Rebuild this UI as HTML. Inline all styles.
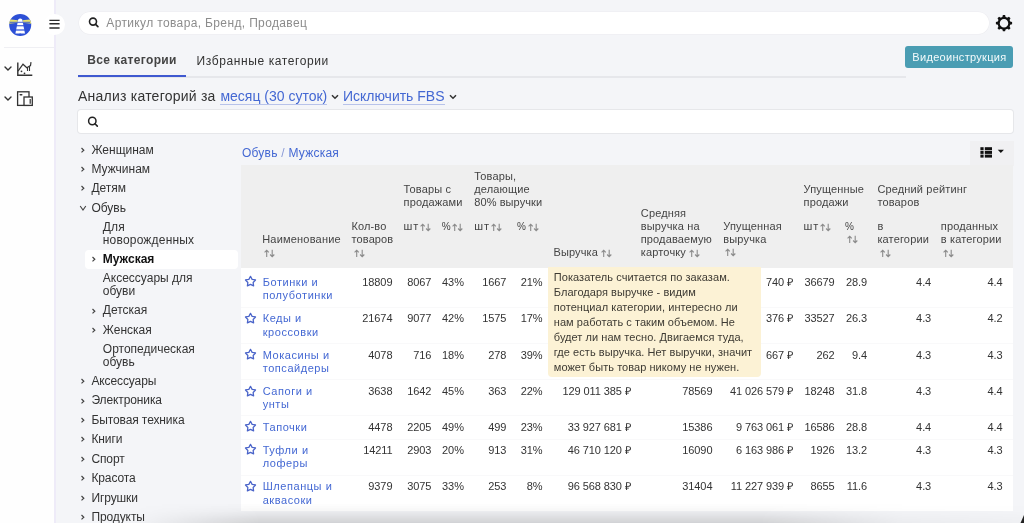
<!DOCTYPE html>
<html><head><meta charset="utf-8"><style>
html,body{margin:0;padding:0;}
body{width:1024px;height:523px;overflow:hidden;position:relative;background:#f4f5f8;font-family:"Liberation Sans", sans-serif;}
.t{position:absolute;white-space:nowrap;}
.r{position:absolute;}
#w{position:absolute;left:0;top:0;width:1024px;height:523px;filter:blur(0.3px);}
</style></head><body><div id="w">
<div class="r" style="left:0px;top:0px;width:54px;height:523px;background:#fefefe;"></div>
<div class="r" style="left:54px;top:0px;width:2px;height:523px;background:#eeebf8;"></div>
<div class="r" style="left:4px;top:47px;width:50px;height:1px;background:#efeff3;"></div>
<svg class="r" style="left:0px;top:0px;" width="40" height="40" viewBox="0 0 40 40">
<defs><clipPath id="lc"><circle cx="20.2" cy="24.9" r="11"/></clipPath></defs>
<g clip-path="url(#lc)">
<rect x="0" y="0" width="40" height="40" fill="#2d50d6"/>
<path d="M8 19.2 L17.8 20.3 L17.8 22.7 L8 23.8 Z" fill="#e9e26a"/>
<path d="M32.4 19.2 L22.6 20.3 L22.6 22.7 L32.4 23.8 Z" fill="#e9e26a"/>
<path d="M18.2 19.6 Q20.2 17.4 22.2 19.6 L25 33.6 L15.4 33.6 Z" fill="#fff"/>
<rect x="10" y="21.8" width="20" height="0.9" fill="#2d50d6"/>
<rect x="10" y="25.2" width="20" height="1.1" fill="#2d50d6"/>
<rect x="10" y="29.4" width="20" height="1.2" fill="#2d50d6"/>
</g>
<circle cx="20.2" cy="34.6" r="1.1" fill="#2d50d6"/>
</svg>
<div class="r" style="left:44px;top:14px;width:21px;height:21px;border-radius:50%;background:#fff;"></div>
<svg class="r" style="left:48px;top:18px;" width="14" height="12" viewBox="0 0 14 12"><path d="M1.4 2.4H11.6M1.4 5.8H11.6M1.4 10H11.6" stroke="#2b2b2b" stroke-width="1.4"/></svg>
<svg class="r" style="left:3px;top:65px;" width="10" height="7" viewBox="0 0 10 7"><path d="M2 2 L5 5 L8 2" fill="none" stroke="#333" stroke-width="1.4" stroke-linecap="round"/></svg>
<svg class="r" style="left:16px;top:61px;" width="18" height="17" viewBox="0 0 18 17"><path d="M1.8 1.5 V14.2 H16.3" fill="none" stroke="#333" stroke-width="1.4"/>
<path d="M2 10.2 L7 3.2 L10.8 6.8 L14.5 4.6 L15 1.2" fill="none" stroke="#333" stroke-width="1.2"/>
<path d="M11.5 6.5 V10 M13.5 5.5 V10" stroke="#333" stroke-width="1.1"/>
<circle cx="5.5" cy="10.3" r="0.9" fill="#333"/><circle cx="8.5" cy="12.3" r="0.9" fill="#333"/></svg>
<svg class="r" style="left:3px;top:95px;" width="10" height="7" viewBox="0 0 10 7"><path d="M2 2 L5 5 L8 2" fill="none" stroke="#333" stroke-width="1.4" stroke-linecap="round"/></svg>
<svg class="r" style="left:16px;top:90px;" width="18" height="17" viewBox="0 0 18 17"><rect x="1.6" y="1.8" width="11.4" height="13.6" fill="none" stroke="#333" stroke-width="1.3"/>
<rect x="8" y="7" width="8.3" height="8.4" fill="#fff" stroke="#333" stroke-width="1.3"/>
<rect x="3.5" y="4" width="3" height="1.6" rx="0.8" fill="#333"/>
<path d="M14.2 9 V13.8" stroke="#333" stroke-width="1.2"/></svg>
<div class="r" style="left:79px;top:11.5px;width:910px;height:22px;border-radius:11px;background:#fff;box-shadow:0 0 0 0.6px #ececf0;"></div>
<svg class="r" style="left:87px;top:16px;" width="14" height="14" viewBox="0 0 14 14"><circle cx="6" cy="5.6" r="3.5" fill="none" stroke="#222" stroke-width="1.6"/><path d="M8.6 8.3 L10.9 10.6" stroke="#222" stroke-width="1.7" stroke-linecap="round"/></svg>
<div class="t" style="top:16.00px;font-size:12px;line-height:15px;color:#8c8c8c;letter-spacing:0.36px;left:106.30px;">Артикул товара, Бренд, Продавец</div>
<svg class="r" style="left:994px;top:13px;" width="20" height="20" viewBox="0 0 20 20"><g transform="translate(10,10.2)"><circle r="5.3" fill="none" stroke="#111" stroke-width="2.1"/><path d="M-1.9 -5 L-1.1 -8.1 L1.1 -8.1 L1.9 -5 Z" fill="#111" transform="rotate(0)"/><path d="M-1.9 -5 L-1.1 -8.1 L1.1 -8.1 L1.9 -5 Z" fill="#111" transform="rotate(45)"/><path d="M-1.9 -5 L-1.1 -8.1 L1.1 -8.1 L1.9 -5 Z" fill="#111" transform="rotate(90)"/><path d="M-1.9 -5 L-1.1 -8.1 L1.1 -8.1 L1.9 -5 Z" fill="#111" transform="rotate(135)"/><path d="M-1.9 -5 L-1.1 -8.1 L1.1 -8.1 L1.9 -5 Z" fill="#111" transform="rotate(180)"/><path d="M-1.9 -5 L-1.1 -8.1 L1.1 -8.1 L1.9 -5 Z" fill="#111" transform="rotate(225)"/><path d="M-1.9 -5 L-1.1 -8.1 L1.1 -8.1 L1.9 -5 Z" fill="#111" transform="rotate(270)"/><path d="M-1.9 -5 L-1.1 -8.1 L1.1 -8.1 L1.9 -5 Z" fill="#111" transform="rotate(315)"/></g></svg>
<div class="t" style="top:53.00px;font-size:12px;line-height:15px;color:#444;font-weight:700;letter-spacing:0.37px;left:87.20px;">Все категории</div>
<div class="t" style="top:54.00px;font-size:12px;line-height:15px;color:#333;letter-spacing:0.6px;left:196.60px;">Избранные категории</div>
<div class="r" style="left:78px;top:76.4px;width:828px;height:1.2px;background:#e6e7eb;"></div>
<div class="r" style="left:77.5px;top:74.8px;width:108.5px;height:2.2px;background:#3f59d0;"></div>
<div class="r" style="left:905.3px;top:46.3px;width:107.6px;height:21.8px;border-radius:3px;background:#4a9db3;"></div>
<div class="t" style="top:50.00px;font-size:11px;line-height:14px;color:#f4fbfc;letter-spacing:0.31px;left:912.30px;">Видеоинструкция</div>
<div class="t" style="top:87.00px;font-size:14px;line-height:18px;color:#333;letter-spacing:0.23px;left:78.00px;">Анализ категорий за</div>
<div class="t" style="top:87.00px;font-size:14px;line-height:18px;color:#4468d3;left:220.40px;">месяц (30 суток)</div>
<div class="r" style="left:220.4px;top:104px;width:107px;height:1px;background:#b8c3ea;"></div>
<svg class="r" style="left:330px;top:93px;" width="10" height="8" viewBox="0 0 10 8"><path d="M2 2.2 L5 5.2 L8 2.2" fill="none" stroke="#333" stroke-width="1.5"/></svg>
<div class="t" style="top:87.00px;font-size:14px;line-height:18px;color:#4468d3;left:342.90px;">Исключить FBS</div>
<div class="r" style="left:342.9px;top:104px;width:102.5px;height:1px;background:#b8c3ea;"></div>
<svg class="r" style="left:448px;top:93px;" width="10" height="8" viewBox="0 0 10 8"><path d="M2 2.2 L5 5.2 L8 2.2" fill="none" stroke="#333" stroke-width="1.5"/></svg>
<div class="r" style="left:78.4px;top:110.3px;width:934.6px;height:23px;border-radius:3px;background:#fff;box-shadow:0 0 0 1px #e6e7ea;"></div>
<svg class="r" style="left:86px;top:115px;" width="14" height="14" viewBox="0 0 14 14"><circle cx="6.3" cy="6" r="3.7" fill="none" stroke="#222" stroke-width="1.5"/><path d="M9 8.8 L11.3 11.1" stroke="#222" stroke-width="1.6" stroke-linecap="round"/></svg>
<div class="r" style="left:85px;top:250px;width:153px;height:18.5px;background:#ffffff;border-radius:4px;"></div>
<svg class="r" style="left:80px;top:145.5px;" width="6" height="8" viewBox="0 0 6 8"><path d="M1.5 2 L3.8 4.2 L1.5 6.4" fill="none" stroke="#444" stroke-width="1.2"/></svg>
<div class="t" style="top:143.00px;font-size:12px;line-height:15px;color:#333;left:91.40px;">Женщинам</div>
<svg class="r" style="left:80px;top:165px;" width="6" height="8" viewBox="0 0 6 8"><path d="M1.5 2 L3.8 4.2 L1.5 6.4" fill="none" stroke="#444" stroke-width="1.2"/></svg>
<div class="t" style="top:162.00px;font-size:12px;line-height:15px;color:#333;left:91.40px;">Мужчинам</div>
<svg class="r" style="left:80px;top:184.3px;" width="6" height="8" viewBox="0 0 6 8"><path d="M1.5 2 L3.8 4.2 L1.5 6.4" fill="none" stroke="#444" stroke-width="1.2"/></svg>
<div class="t" style="top:181.00px;font-size:12px;line-height:15px;color:#333;left:91.40px;">Детям</div>
<svg class="r" style="left:79px;top:203.8px;" width="9" height="8" viewBox="0 0 9 8"><path d="M1.2 2 L4 6 L6.8 2" fill="none" stroke="#444" stroke-width="1.1"/></svg>
<div class="t" style="top:201.00px;font-size:12px;line-height:15px;color:#333;left:91.40px;">Обувь</div>
<div class="t" style="top:220.00px;font-size:12px;line-height:15px;color:#333;letter-spacing:0.19px;left:102.80px;">Для</div>
<div class="t" style="top:233.00px;font-size:12px;line-height:15px;color:#333;letter-spacing:0.19px;left:102.80px;">новорожденных</div>
<svg class="r" style="left:91.3px;top:254.7px;" width="6" height="8" viewBox="0 0 6 8"><path d="M1.5 2 L3.8 4.2 L1.5 6.4" fill="none" stroke="#444" stroke-width="1.2"/></svg>
<div class="t" style="top:252.00px;font-size:12px;line-height:15px;color:#111;font-weight:700;left:102.80px;">Мужская</div>
<div class="t" style="top:271.00px;font-size:12px;line-height:15px;color:#333;left:102.80px;">Аксессуары для</div>
<div class="t" style="top:284.00px;font-size:12px;line-height:15px;color:#333;left:102.80px;">обуви</div>
<svg class="r" style="left:91.3px;top:306.5px;" width="6" height="8" viewBox="0 0 6 8"><path d="M1.5 2 L3.8 4.2 L1.5 6.4" fill="none" stroke="#444" stroke-width="1.2"/></svg>
<div class="t" style="top:303.00px;font-size:12px;line-height:15px;color:#333;left:102.80px;">Детская</div>
<svg class="r" style="left:91.3px;top:325.9px;" width="6" height="8" viewBox="0 0 6 8"><path d="M1.5 2 L3.8 4.2 L1.5 6.4" fill="none" stroke="#444" stroke-width="1.2"/></svg>
<div class="t" style="top:323.00px;font-size:12px;line-height:15px;color:#333;left:102.80px;">Женская</div>
<div class="t" style="top:342.00px;font-size:12px;line-height:15px;color:#333;left:102.80px;">Ортопедическая</div>
<div class="t" style="top:355.00px;font-size:12px;line-height:15px;color:#333;left:102.80px;">обувь</div>
<svg class="r" style="left:80px;top:377.3px;" width="6" height="8" viewBox="0 0 6 8"><path d="M1.5 2 L3.8 4.2 L1.5 6.4" fill="none" stroke="#444" stroke-width="1.2"/></svg>
<div class="t" style="top:374.00px;font-size:12px;line-height:15px;color:#333;letter-spacing:-0.1px;left:91.40px;">Аксессуары</div>
<svg class="r" style="left:80px;top:396.5px;" width="6" height="8" viewBox="0 0 6 8"><path d="M1.5 2 L3.8 4.2 L1.5 6.4" fill="none" stroke="#444" stroke-width="1.2"/></svg>
<div class="t" style="top:393.00px;font-size:12px;line-height:15px;color:#333;letter-spacing:-0.1px;left:91.40px;">Электроника</div>
<svg class="r" style="left:80px;top:416px;" width="6" height="8" viewBox="0 0 6 8"><path d="M1.5 2 L3.8 4.2 L1.5 6.4" fill="none" stroke="#444" stroke-width="1.2"/></svg>
<div class="t" style="top:413.00px;font-size:12px;line-height:15px;color:#333;letter-spacing:-0.1px;left:91.40px;">Бытовая техника</div>
<svg class="r" style="left:80px;top:435.3px;" width="6" height="8" viewBox="0 0 6 8"><path d="M1.5 2 L3.8 4.2 L1.5 6.4" fill="none" stroke="#444" stroke-width="1.2"/></svg>
<div class="t" style="top:432.00px;font-size:12px;line-height:15px;color:#333;letter-spacing:-0.1px;left:91.40px;">Книги</div>
<svg class="r" style="left:80px;top:454.8px;" width="6" height="8" viewBox="0 0 6 8"><path d="M1.5 2 L3.8 4.2 L1.5 6.4" fill="none" stroke="#444" stroke-width="1.2"/></svg>
<div class="t" style="top:452.00px;font-size:12px;line-height:15px;color:#333;letter-spacing:-0.1px;left:91.40px;">Спорт</div>
<svg class="r" style="left:80px;top:474px;" width="6" height="8" viewBox="0 0 6 8"><path d="M1.5 2 L3.8 4.2 L1.5 6.4" fill="none" stroke="#444" stroke-width="1.2"/></svg>
<div class="t" style="top:471.00px;font-size:12px;line-height:15px;color:#333;letter-spacing:-0.1px;left:91.40px;">Красота</div>
<svg class="r" style="left:80px;top:493.6px;" width="6" height="8" viewBox="0 0 6 8"><path d="M1.5 2 L3.8 4.2 L1.5 6.4" fill="none" stroke="#444" stroke-width="1.2"/></svg>
<div class="t" style="top:491.00px;font-size:12px;line-height:15px;color:#333;letter-spacing:-0.1px;left:91.40px;">Игрушки</div>
<svg class="r" style="left:80px;top:512.8px;" width="6" height="8" viewBox="0 0 6 8"><path d="M1.5 2 L3.8 4.2 L1.5 6.4" fill="none" stroke="#444" stroke-width="1.2"/></svg>
<div class="t" style="top:510.00px;font-size:12px;line-height:15px;color:#333;letter-spacing:-0.1px;left:91.40px;">Продукты</div>
<div class="t" style="top:146.00px;font-size:12px;line-height:15px;color:#4468d3;letter-spacing:0.24px;left:241.90px;">Обувь <span style="color:#8a9ad6">/</span> Мужская</div>
<div class="r" style="left:970px;top:141px;width:44px;height:25px;background:#f0f0f2;"></div>
<svg class="r" style="left:980px;top:147px;" width="13" height="11" viewBox="0 0 13 11"><rect x="0.4" y="0.2" width="3.2" height="3" fill="#111"/><rect x="4.8" y="0.2" width="7.2" height="3" fill="#111"/><rect x="0.4" y="3.9" width="3.2" height="3" fill="#111"/><rect x="4.8" y="3.9" width="7.2" height="3" fill="#111"/><rect x="0.4" y="7.6" width="3.2" height="3" fill="#111"/><rect x="4.8" y="7.6" width="7.2" height="3" fill="#111"/></svg>
<svg class="r" style="left:997px;top:149px;" width="8" height="5" viewBox="0 0 8 5"><path d="M0.8 0.8 H6.9 L3.85 4 Z" fill="#111"/></svg>
<div class="r" style="left:241px;top:165.4px;width:772px;height:102.3px;background:#efefef;"></div>
<div class="r" style="left:241px;top:267.7px;width:772px;height:243.5px;background:#ffffff;"></div>
<div class="t" style="top:232.00px;font-size:11px;line-height:14px;color:#444;letter-spacing:0.2px;left:262.20px;">Наименование</div>
<svg class="r" style="left:264px;top:248.7px;" width="12" height="9" viewBox="0 0 12 9"><path d="M2.7 8 V1.2 M0.6 3.3 L2.7 1.2 L4.8 3.3" fill="none" stroke="#8a8a8a" stroke-width="1.1"/><path d="M8.2 0.8 V7.6 M6.1 5.5 L8.2 7.6 L10.3 5.5" fill="none" stroke="#8a8a8a" stroke-width="1.1"/></svg>
<div class="t" style="top:219.00px;font-size:11px;line-height:14px;color:#444;letter-spacing:0.1px;left:351.60px;">Кол-во</div>
<div class="t" style="top:232.00px;font-size:11px;line-height:14px;color:#444;letter-spacing:0.1px;left:351.60px;">товаров</div>
<svg class="r" style="left:353.5px;top:248.7px;" width="12" height="9" viewBox="0 0 12 9"><path d="M2.7 8 V1.2 M0.6 3.3 L2.7 1.2 L4.8 3.3" fill="none" stroke="#8a8a8a" stroke-width="1.1"/><path d="M8.2 0.8 V7.6 M6.1 5.5 L8.2 7.6 L10.3 5.5" fill="none" stroke="#8a8a8a" stroke-width="1.1"/></svg>
<div class="t" style="top:182.00px;font-size:11px;line-height:14px;color:#444;letter-spacing:0.15px;left:403.60px;">Товары с</div>
<div class="t" style="top:195.00px;font-size:11px;line-height:14px;color:#444;letter-spacing:0.15px;left:403.60px;">продажами</div>
<div class="t" style="top:219.00px;font-size:11px;line-height:14px;color:#444;letter-spacing:0.9px;left:403.60px;">шт</div>
<svg class="r" style="left:420.2px;top:223.2px;" width="12" height="9" viewBox="0 0 12 9"><path d="M2.7 8 V1.2 M0.6 3.3 L2.7 1.2 L4.8 3.3" fill="none" stroke="#8a8a8a" stroke-width="1.1"/><path d="M8.2 0.8 V7.6 M6.1 5.5 L8.2 7.6 L10.3 5.5" fill="none" stroke="#8a8a8a" stroke-width="1.1"/></svg>
<div class="t" style="top:221.00px;font-size:10px;line-height:12px;color:#444;letter-spacing:0.15px;left:441.80px;">%</div>
<svg class="r" style="left:452.2px;top:223.2px;" width="12" height="9" viewBox="0 0 12 9"><path d="M2.7 8 V1.2 M0.6 3.3 L2.7 1.2 L4.8 3.3" fill="none" stroke="#8a8a8a" stroke-width="1.1"/><path d="M8.2 0.8 V7.6 M6.1 5.5 L8.2 7.6 L10.3 5.5" fill="none" stroke="#8a8a8a" stroke-width="1.1"/></svg>
<div class="t" style="top:169.00px;font-size:11px;line-height:14px;color:#444;letter-spacing:0.15px;left:474.30px;">Товары,</div>
<div class="t" style="top:182.00px;font-size:11px;line-height:14px;color:#444;letter-spacing:0.15px;left:474.30px;">делающие</div>
<div class="t" style="top:195.00px;font-size:11px;line-height:14px;color:#444;letter-spacing:0.08px;left:474.30px;">80% выручки</div>
<div class="t" style="top:219.00px;font-size:11px;line-height:14px;color:#444;letter-spacing:0.9px;left:474.30px;">шт</div>
<svg class="r" style="left:491px;top:223.2px;" width="12" height="9" viewBox="0 0 12 9"><path d="M2.7 8 V1.2 M0.6 3.3 L2.7 1.2 L4.8 3.3" fill="none" stroke="#8a8a8a" stroke-width="1.1"/><path d="M8.2 0.8 V7.6 M6.1 5.5 L8.2 7.6 L10.3 5.5" fill="none" stroke="#8a8a8a" stroke-width="1.1"/></svg>
<div class="t" style="top:221.00px;font-size:10px;line-height:12px;color:#444;letter-spacing:0.15px;left:517.00px;">%</div>
<svg class="r" style="left:527.6px;top:223.2px;" width="12" height="9" viewBox="0 0 12 9"><path d="M2.7 8 V1.2 M0.6 3.3 L2.7 1.2 L4.8 3.3" fill="none" stroke="#8a8a8a" stroke-width="1.1"/><path d="M8.2 0.8 V7.6 M6.1 5.5 L8.2 7.6 L10.3 5.5" fill="none" stroke="#8a8a8a" stroke-width="1.1"/></svg>
<div class="t" style="top:245.00px;font-size:11px;line-height:14px;color:#444;letter-spacing:0.15px;left:553.40px;">Выручка</div>
<svg class="r" style="left:600.6px;top:248.7px;" width="12" height="9" viewBox="0 0 12 9"><path d="M2.7 8 V1.2 M0.6 3.3 L2.7 1.2 L4.8 3.3" fill="none" stroke="#8a8a8a" stroke-width="1.1"/><path d="M8.2 0.8 V7.6 M6.1 5.5 L8.2 7.6 L10.3 5.5" fill="none" stroke="#8a8a8a" stroke-width="1.1"/></svg>
<div class="t" style="top:206.00px;font-size:11px;line-height:14px;color:#444;letter-spacing:0.15px;left:640.80px;">Средняя</div>
<div class="t" style="top:219.00px;font-size:11px;line-height:14px;color:#444;letter-spacing:0.15px;left:640.80px;">выручка на</div>
<div class="t" style="top:232.00px;font-size:11px;line-height:14px;color:#444;letter-spacing:0.12px;left:640.80px;">продаваемую</div>
<div class="t" style="top:245.00px;font-size:11px;line-height:14px;color:#444;letter-spacing:0.15px;left:640.80px;">карточку</div>
<svg class="r" style="left:688.8px;top:248.7px;" width="12" height="9" viewBox="0 0 12 9"><path d="M2.7 8 V1.2 M0.6 3.3 L2.7 1.2 L4.8 3.3" fill="none" stroke="#8a8a8a" stroke-width="1.1"/><path d="M8.2 0.8 V7.6 M6.1 5.5 L8.2 7.6 L10.3 5.5" fill="none" stroke="#8a8a8a" stroke-width="1.1"/></svg>
<div class="t" style="top:219.00px;font-size:11px;line-height:14px;color:#444;letter-spacing:0.15px;left:723.30px;">Упущенная</div>
<div class="t" style="top:232.00px;font-size:11px;line-height:14px;color:#444;letter-spacing:0.15px;left:723.30px;">выручка</div>
<svg class="r" style="left:724.8px;top:248.2px;" width="12" height="9" viewBox="0 0 12 9"><path d="M2.7 8 V1.2 M0.6 3.3 L2.7 1.2 L4.8 3.3" fill="none" stroke="#8a8a8a" stroke-width="1.1"/><path d="M8.2 0.8 V7.6 M6.1 5.5 L8.2 7.6 L10.3 5.5" fill="none" stroke="#8a8a8a" stroke-width="1.1"/></svg>
<div class="t" style="top:182.00px;font-size:11px;line-height:14px;color:#444;letter-spacing:0.15px;left:803.60px;">Упущенные</div>
<div class="t" style="top:195.00px;font-size:11px;line-height:14px;color:#444;letter-spacing:0.15px;left:803.60px;">продажи</div>
<div class="t" style="top:219.00px;font-size:11px;line-height:14px;color:#444;letter-spacing:0.9px;left:803.60px;">шт</div>
<svg class="r" style="left:820px;top:222.89999999999998px;" width="12" height="9" viewBox="0 0 12 9"><path d="M2.7 8 V1.2 M0.6 3.3 L2.7 1.2 L4.8 3.3" fill="none" stroke="#8a8a8a" stroke-width="1.1"/><path d="M8.2 0.8 V7.6 M6.1 5.5 L8.2 7.6 L10.3 5.5" fill="none" stroke="#8a8a8a" stroke-width="1.1"/></svg>
<div class="t" style="top:221.00px;font-size:10px;line-height:12px;color:#444;letter-spacing:0.15px;left:845.00px;">%</div>
<svg class="r" style="left:847.3px;top:235.39999999999998px;" width="12" height="9" viewBox="0 0 12 9"><path d="M2.7 8 V1.2 M0.6 3.3 L2.7 1.2 L4.8 3.3" fill="none" stroke="#8a8a8a" stroke-width="1.1"/><path d="M8.2 0.8 V7.6 M6.1 5.5 L8.2 7.6 L10.3 5.5" fill="none" stroke="#8a8a8a" stroke-width="1.1"/></svg>
<div class="t" style="top:182.00px;font-size:11px;line-height:14px;color:#444;letter-spacing:0.15px;left:877.40px;">Средний рейтинг</div>
<div class="t" style="top:195.00px;font-size:11px;line-height:14px;color:#444;letter-spacing:0.15px;left:877.40px;">товаров</div>
<div class="t" style="top:219.00px;font-size:11px;line-height:14px;color:#444;letter-spacing:0.15px;left:877.40px;">в</div>
<div class="t" style="top:232.00px;font-size:11px;line-height:14px;color:#444;letter-spacing:0.15px;left:877.40px;">категории</div>
<svg class="r" style="left:879.5px;top:248.7px;" width="12" height="9" viewBox="0 0 12 9"><path d="M2.7 8 V1.2 M0.6 3.3 L2.7 1.2 L4.8 3.3" fill="none" stroke="#8a8a8a" stroke-width="1.1"/><path d="M8.2 0.8 V7.6 M6.1 5.5 L8.2 7.6 L10.3 5.5" fill="none" stroke="#8a8a8a" stroke-width="1.1"/></svg>
<div class="t" style="top:219.00px;font-size:11px;line-height:14px;color:#444;letter-spacing:0.15px;left:940.80px;">проданных</div>
<div class="t" style="top:232.00px;font-size:11px;line-height:14px;color:#444;letter-spacing:0.15px;left:940.80px;">в категории</div>
<svg class="r" style="left:943px;top:248.7px;" width="12" height="9" viewBox="0 0 12 9"><path d="M2.7 8 V1.2 M0.6 3.3 L2.7 1.2 L4.8 3.3" fill="none" stroke="#8a8a8a" stroke-width="1.1"/><path d="M8.2 0.8 V7.6 M6.1 5.5 L8.2 7.6 L10.3 5.5" fill="none" stroke="#8a8a8a" stroke-width="1.1"/></svg>
<div class="r" style="left:241px;top:306.5px;width:772px;height:1px;background:#f9f9fa;"></div>
<div class="r" style="left:241px;top:342.5px;width:772px;height:1px;background:#f9f9fa;"></div>
<div class="r" style="left:241px;top:379px;width:772px;height:1px;background:#f9f9fa;"></div>
<div class="r" style="left:241px;top:415px;width:772px;height:1px;background:#f9f9fa;"></div>
<div class="r" style="left:241px;top:439px;width:772px;height:1px;background:#f9f9fa;"></div>
<div class="r" style="left:241px;top:474.8px;width:772px;height:1px;background:#f9f9fa;"></div>
<svg class="r" style="left:244.2px;top:275.40000000000003px;" width="13" height="13" viewBox="0 0 13 13"><path d="M6.50 1.30 L8.12 4.38 L11.54 4.96 L9.12 7.45 L9.62 10.89 L6.50 9.35 L3.38 10.89 L3.88 7.45 L1.46 4.96 L4.88 4.38 Z" fill="none" stroke="#4a64c9" stroke-width="1.25" stroke-linejoin="round"/></svg>
<div class="t" style="top:275.00px;font-size:11px;line-height:14px;color:#4468d3;letter-spacing:0.55px;left:262.70px;">Ботинки и</div>
<div class="t" style="top:288.00px;font-size:11px;line-height:14px;color:#4468d3;letter-spacing:0.55px;left:262.70px;">полуботинки</div>
<div class="t" style="top:275.00px;font-size:11px;line-height:14px;color:#333;letter-spacing:-0.1px;right:631.60px;text-align:right;">18809</div>
<div class="t" style="top:275.00px;font-size:11px;line-height:14px;color:#333;letter-spacing:-0.1px;right:592.70px;text-align:right;">8067</div>
<div class="t" style="top:275.00px;font-size:11px;line-height:14px;color:#333;letter-spacing:-0.1px;right:560.20px;text-align:right;">43%</div>
<div class="t" style="top:275.00px;font-size:11px;line-height:14px;color:#333;letter-spacing:-0.1px;right:517.80px;text-align:right;">1667</div>
<div class="t" style="top:275.00px;font-size:11px;line-height:14px;color:#333;letter-spacing:-0.1px;right:481.50px;text-align:right;">21%</div>
<div class="t" style="top:275.00px;font-size:11px;line-height:14px;color:#333;letter-spacing:-0.1px;right:231.10px;text-align:right;">740 ₽</div>
<div class="t" style="top:275.00px;font-size:11px;line-height:14px;color:#333;letter-spacing:-0.1px;right:189.50px;text-align:right;">36679</div>
<div class="t" style="top:275.00px;font-size:11px;line-height:14px;color:#333;letter-spacing:-0.1px;right:157.10px;text-align:right;">28.9</div>
<div class="t" style="top:275.00px;font-size:11px;line-height:14px;color:#333;letter-spacing:-0.1px;right:92.90px;text-align:right;">4.4</div>
<div class="t" style="top:275.00px;font-size:11px;line-height:14px;color:#333;letter-spacing:-0.1px;right:21.50px;text-align:right;">4.4</div>
<svg class="r" style="left:244.2px;top:311.6px;" width="13" height="13" viewBox="0 0 13 13"><path d="M6.50 1.30 L8.12 4.38 L11.54 4.96 L9.12 7.45 L9.62 10.89 L6.50 9.35 L3.38 10.89 L3.88 7.45 L1.46 4.96 L4.88 4.38 Z" fill="none" stroke="#4a64c9" stroke-width="1.25" stroke-linejoin="round"/></svg>
<div class="t" style="top:311.00px;font-size:11px;line-height:14px;color:#4468d3;letter-spacing:0.55px;left:262.70px;">Кеды и</div>
<div class="t" style="top:325.00px;font-size:11px;line-height:14px;color:#4468d3;letter-spacing:0.55px;left:262.70px;">кроссовки</div>
<div class="t" style="top:311.00px;font-size:11px;line-height:14px;color:#333;letter-spacing:-0.1px;right:631.60px;text-align:right;">21674</div>
<div class="t" style="top:311.00px;font-size:11px;line-height:14px;color:#333;letter-spacing:-0.1px;right:592.70px;text-align:right;">9077</div>
<div class="t" style="top:311.00px;font-size:11px;line-height:14px;color:#333;letter-spacing:-0.1px;right:560.20px;text-align:right;">42%</div>
<div class="t" style="top:311.00px;font-size:11px;line-height:14px;color:#333;letter-spacing:-0.1px;right:517.80px;text-align:right;">1575</div>
<div class="t" style="top:311.00px;font-size:11px;line-height:14px;color:#333;letter-spacing:-0.1px;right:481.50px;text-align:right;">17%</div>
<div class="t" style="top:311.00px;font-size:11px;line-height:14px;color:#333;letter-spacing:-0.1px;right:231.10px;text-align:right;">376 ₽</div>
<div class="t" style="top:311.00px;font-size:11px;line-height:14px;color:#333;letter-spacing:-0.1px;right:189.50px;text-align:right;">33527</div>
<div class="t" style="top:311.00px;font-size:11px;line-height:14px;color:#333;letter-spacing:-0.1px;right:157.10px;text-align:right;">26.3</div>
<div class="t" style="top:311.00px;font-size:11px;line-height:14px;color:#333;letter-spacing:-0.1px;right:92.90px;text-align:right;">4.3</div>
<div class="t" style="top:311.00px;font-size:11px;line-height:14px;color:#333;letter-spacing:-0.1px;right:21.50px;text-align:right;">4.2</div>
<svg class="r" style="left:244.2px;top:348.40000000000003px;" width="13" height="13" viewBox="0 0 13 13"><path d="M6.50 1.30 L8.12 4.38 L11.54 4.96 L9.12 7.45 L9.62 10.89 L6.50 9.35 L3.38 10.89 L3.88 7.45 L1.46 4.96 L4.88 4.38 Z" fill="none" stroke="#4a64c9" stroke-width="1.25" stroke-linejoin="round"/></svg>
<div class="t" style="top:348.00px;font-size:11px;line-height:14px;color:#4468d3;letter-spacing:0.55px;left:262.70px;">Мокасины и</div>
<div class="t" style="top:361.00px;font-size:11px;line-height:14px;color:#4468d3;letter-spacing:0.55px;left:262.70px;">топсайдеры</div>
<div class="t" style="top:348.00px;font-size:11px;line-height:14px;color:#333;letter-spacing:-0.1px;right:631.60px;text-align:right;">4078</div>
<div class="t" style="top:348.00px;font-size:11px;line-height:14px;color:#333;letter-spacing:-0.1px;right:592.70px;text-align:right;">716</div>
<div class="t" style="top:348.00px;font-size:11px;line-height:14px;color:#333;letter-spacing:-0.1px;right:560.20px;text-align:right;">18%</div>
<div class="t" style="top:348.00px;font-size:11px;line-height:14px;color:#333;letter-spacing:-0.1px;right:517.80px;text-align:right;">278</div>
<div class="t" style="top:348.00px;font-size:11px;line-height:14px;color:#333;letter-spacing:-0.1px;right:481.50px;text-align:right;">39%</div>
<div class="t" style="top:348.00px;font-size:11px;line-height:14px;color:#333;letter-spacing:-0.1px;right:231.10px;text-align:right;">667 ₽</div>
<div class="t" style="top:348.00px;font-size:11px;line-height:14px;color:#333;letter-spacing:-0.1px;right:189.50px;text-align:right;">262</div>
<div class="t" style="top:348.00px;font-size:11px;line-height:14px;color:#333;letter-spacing:-0.1px;right:157.10px;text-align:right;">9.4</div>
<div class="t" style="top:348.00px;font-size:11px;line-height:14px;color:#333;letter-spacing:-0.1px;right:92.90px;text-align:right;">4.3</div>
<div class="t" style="top:348.00px;font-size:11px;line-height:14px;color:#333;letter-spacing:-0.1px;right:21.50px;text-align:right;">4.3</div>
<svg class="r" style="left:244.2px;top:384.6px;" width="13" height="13" viewBox="0 0 13 13"><path d="M6.50 1.30 L8.12 4.38 L11.54 4.96 L9.12 7.45 L9.62 10.89 L6.50 9.35 L3.38 10.89 L3.88 7.45 L1.46 4.96 L4.88 4.38 Z" fill="none" stroke="#4a64c9" stroke-width="1.25" stroke-linejoin="round"/></svg>
<div class="t" style="top:384.00px;font-size:11px;line-height:14px;color:#4468d3;letter-spacing:0.55px;left:262.70px;">Сапоги и</div>
<div class="t" style="top:397.00px;font-size:11px;line-height:14px;color:#4468d3;letter-spacing:0.55px;left:262.70px;">унты</div>
<div class="t" style="top:384.00px;font-size:11px;line-height:14px;color:#333;letter-spacing:-0.1px;right:631.60px;text-align:right;">3638</div>
<div class="t" style="top:384.00px;font-size:11px;line-height:14px;color:#333;letter-spacing:-0.1px;right:592.70px;text-align:right;">1642</div>
<div class="t" style="top:384.00px;font-size:11px;line-height:14px;color:#333;letter-spacing:-0.1px;right:560.20px;text-align:right;">45%</div>
<div class="t" style="top:384.00px;font-size:11px;line-height:14px;color:#333;letter-spacing:-0.1px;right:517.80px;text-align:right;">363</div>
<div class="t" style="top:384.00px;font-size:11px;line-height:14px;color:#333;letter-spacing:-0.1px;right:481.50px;text-align:right;">22%</div>
<div class="t" style="top:384.00px;font-size:11px;line-height:14px;color:#333;letter-spacing:-0.1px;right:393.40px;text-align:right;">129 011 385 ₽</div>
<div class="t" style="top:384.00px;font-size:11px;line-height:14px;color:#333;letter-spacing:-0.1px;right:311.60px;text-align:right;">78569</div>
<div class="t" style="top:384.00px;font-size:11px;line-height:14px;color:#333;letter-spacing:-0.1px;right:231.10px;text-align:right;">41 026 579 ₽</div>
<div class="t" style="top:384.00px;font-size:11px;line-height:14px;color:#333;letter-spacing:-0.1px;right:189.50px;text-align:right;">18248</div>
<div class="t" style="top:384.00px;font-size:11px;line-height:14px;color:#333;letter-spacing:-0.1px;right:157.10px;text-align:right;">31.8</div>
<div class="t" style="top:384.00px;font-size:11px;line-height:14px;color:#333;letter-spacing:-0.1px;right:92.90px;text-align:right;">4.3</div>
<div class="t" style="top:384.00px;font-size:11px;line-height:14px;color:#333;letter-spacing:-0.1px;right:21.50px;text-align:right;">4.4</div>
<svg class="r" style="left:244.2px;top:420.3px;" width="13" height="13" viewBox="0 0 13 13"><path d="M6.50 1.30 L8.12 4.38 L11.54 4.96 L9.12 7.45 L9.62 10.89 L6.50 9.35 L3.38 10.89 L3.88 7.45 L1.46 4.96 L4.88 4.38 Z" fill="none" stroke="#4a64c9" stroke-width="1.25" stroke-linejoin="round"/></svg>
<div class="t" style="top:420.00px;font-size:11px;line-height:14px;color:#4468d3;letter-spacing:0.55px;left:262.70px;">Тапочки</div>
<div class="t" style="top:420.00px;font-size:11px;line-height:14px;color:#333;letter-spacing:-0.1px;right:631.60px;text-align:right;">4478</div>
<div class="t" style="top:420.00px;font-size:11px;line-height:14px;color:#333;letter-spacing:-0.1px;right:592.70px;text-align:right;">2205</div>
<div class="t" style="top:420.00px;font-size:11px;line-height:14px;color:#333;letter-spacing:-0.1px;right:560.20px;text-align:right;">49%</div>
<div class="t" style="top:420.00px;font-size:11px;line-height:14px;color:#333;letter-spacing:-0.1px;right:517.80px;text-align:right;">499</div>
<div class="t" style="top:420.00px;font-size:11px;line-height:14px;color:#333;letter-spacing:-0.1px;right:481.50px;text-align:right;">23%</div>
<div class="t" style="top:420.00px;font-size:11px;line-height:14px;color:#333;letter-spacing:-0.1px;right:393.40px;text-align:right;">33 927 681 ₽</div>
<div class="t" style="top:420.00px;font-size:11px;line-height:14px;color:#333;letter-spacing:-0.1px;right:311.60px;text-align:right;">15386</div>
<div class="t" style="top:420.00px;font-size:11px;line-height:14px;color:#333;letter-spacing:-0.1px;right:231.10px;text-align:right;">9 763 061 ₽</div>
<div class="t" style="top:420.00px;font-size:11px;line-height:14px;color:#333;letter-spacing:-0.1px;right:189.50px;text-align:right;">16586</div>
<div class="t" style="top:420.00px;font-size:11px;line-height:14px;color:#333;letter-spacing:-0.1px;right:157.10px;text-align:right;">28.8</div>
<div class="t" style="top:420.00px;font-size:11px;line-height:14px;color:#333;letter-spacing:-0.1px;right:92.90px;text-align:right;">4.4</div>
<div class="t" style="top:420.00px;font-size:11px;line-height:14px;color:#333;letter-spacing:-0.1px;right:21.50px;text-align:right;">4.4</div>
<svg class="r" style="left:244.2px;top:443.40000000000003px;" width="13" height="13" viewBox="0 0 13 13"><path d="M6.50 1.30 L8.12 4.38 L11.54 4.96 L9.12 7.45 L9.62 10.89 L6.50 9.35 L3.38 10.89 L3.88 7.45 L1.46 4.96 L4.88 4.38 Z" fill="none" stroke="#4a64c9" stroke-width="1.25" stroke-linejoin="round"/></svg>
<div class="t" style="top:443.00px;font-size:11px;line-height:14px;color:#4468d3;letter-spacing:0.55px;left:262.70px;">Туфли и</div>
<div class="t" style="top:456.00px;font-size:11px;line-height:14px;color:#4468d3;letter-spacing:0.55px;left:262.70px;">лоферы</div>
<div class="t" style="top:443.00px;font-size:11px;line-height:14px;color:#333;letter-spacing:-0.1px;right:631.60px;text-align:right;">14211</div>
<div class="t" style="top:443.00px;font-size:11px;line-height:14px;color:#333;letter-spacing:-0.1px;right:592.70px;text-align:right;">2903</div>
<div class="t" style="top:443.00px;font-size:11px;line-height:14px;color:#333;letter-spacing:-0.1px;right:560.20px;text-align:right;">20%</div>
<div class="t" style="top:443.00px;font-size:11px;line-height:14px;color:#333;letter-spacing:-0.1px;right:517.80px;text-align:right;">913</div>
<div class="t" style="top:443.00px;font-size:11px;line-height:14px;color:#333;letter-spacing:-0.1px;right:481.50px;text-align:right;">31%</div>
<div class="t" style="top:443.00px;font-size:11px;line-height:14px;color:#333;letter-spacing:-0.1px;right:393.40px;text-align:right;">46 710 120 ₽</div>
<div class="t" style="top:443.00px;font-size:11px;line-height:14px;color:#333;letter-spacing:-0.1px;right:311.60px;text-align:right;">16090</div>
<div class="t" style="top:443.00px;font-size:11px;line-height:14px;color:#333;letter-spacing:-0.1px;right:231.10px;text-align:right;">6 163 986 ₽</div>
<div class="t" style="top:443.00px;font-size:11px;line-height:14px;color:#333;letter-spacing:-0.1px;right:189.50px;text-align:right;">1926</div>
<div class="t" style="top:443.00px;font-size:11px;line-height:14px;color:#333;letter-spacing:-0.1px;right:157.10px;text-align:right;">13.2</div>
<div class="t" style="top:443.00px;font-size:11px;line-height:14px;color:#333;letter-spacing:-0.1px;right:92.90px;text-align:right;">4.3</div>
<div class="t" style="top:443.00px;font-size:11px;line-height:14px;color:#333;letter-spacing:-0.1px;right:21.50px;text-align:right;">4.3</div>
<svg class="r" style="left:244.2px;top:479.6px;" width="13" height="13" viewBox="0 0 13 13"><path d="M6.50 1.30 L8.12 4.38 L11.54 4.96 L9.12 7.45 L9.62 10.89 L6.50 9.35 L3.38 10.89 L3.88 7.45 L1.46 4.96 L4.88 4.38 Z" fill="none" stroke="#4a64c9" stroke-width="1.25" stroke-linejoin="round"/></svg>
<div class="t" style="top:479.00px;font-size:11px;line-height:14px;color:#4468d3;letter-spacing:0.55px;left:262.70px;">Шлепанцы и</div>
<div class="t" style="top:493.00px;font-size:11px;line-height:14px;color:#4468d3;letter-spacing:0.55px;left:262.70px;">аквасоки</div>
<div class="t" style="top:479.00px;font-size:11px;line-height:14px;color:#333;letter-spacing:-0.1px;right:631.60px;text-align:right;">9379</div>
<div class="t" style="top:479.00px;font-size:11px;line-height:14px;color:#333;letter-spacing:-0.1px;right:592.70px;text-align:right;">3075</div>
<div class="t" style="top:479.00px;font-size:11px;line-height:14px;color:#333;letter-spacing:-0.1px;right:560.20px;text-align:right;">33%</div>
<div class="t" style="top:479.00px;font-size:11px;line-height:14px;color:#333;letter-spacing:-0.1px;right:517.80px;text-align:right;">253</div>
<div class="t" style="top:479.00px;font-size:11px;line-height:14px;color:#333;letter-spacing:-0.1px;right:481.50px;text-align:right;">8%</div>
<div class="t" style="top:479.00px;font-size:11px;line-height:14px;color:#333;letter-spacing:-0.1px;right:393.40px;text-align:right;">96 568 830 ₽</div>
<div class="t" style="top:479.00px;font-size:11px;line-height:14px;color:#333;letter-spacing:-0.1px;right:311.60px;text-align:right;">31404</div>
<div class="t" style="top:479.00px;font-size:11px;line-height:14px;color:#333;letter-spacing:-0.1px;right:231.10px;text-align:right;">11 227 939 ₽</div>
<div class="t" style="top:479.00px;font-size:11px;line-height:14px;color:#333;letter-spacing:-0.1px;right:189.50px;text-align:right;">8655</div>
<div class="t" style="top:479.00px;font-size:11px;line-height:14px;color:#333;letter-spacing:-0.1px;right:157.10px;text-align:right;">11.6</div>
<div class="t" style="top:479.00px;font-size:11px;line-height:14px;color:#333;letter-spacing:-0.1px;right:92.90px;text-align:right;">4.3</div>
<div class="t" style="top:479.00px;font-size:11px;line-height:14px;color:#333;letter-spacing:-0.1px;right:21.50px;text-align:right;">4.3</div>
<div class="r" style="left:548.2px;top:267.3px;width:213.3px;height:109.5px;background:#fcf2d5;border-radius:0 0 4px 4px;"></div>
<div class="t" style="top:270.00px;font-size:11px;line-height:14px;color:#3d3a33;letter-spacing:0.05px;left:553.80px;">Показатель считается по заказам.</div>
<div class="t" style="top:285.00px;font-size:11px;line-height:14px;color:#3d3a33;letter-spacing:0.05px;left:553.80px;">Благодаря выручке - видим</div>
<div class="t" style="top:300.00px;font-size:11px;line-height:14px;color:#3d3a33;letter-spacing:0.05px;left:553.80px;">потенциал категории, интересно ли</div>
<div class="t" style="top:315.00px;font-size:11px;line-height:14px;color:#3d3a33;letter-spacing:0.05px;left:553.80px;">нам работать с таким объемом. Не</div>
<div class="t" style="top:330.00px;font-size:11px;line-height:14px;color:#3d3a33;letter-spacing:0.05px;left:553.80px;">будет ли нам тесно. Двигаемся туда,</div>
<div class="t" style="top:345.00px;font-size:11px;line-height:14px;color:#3d3a33;letter-spacing:0.05px;left:553.80px;">где есть выручка. Нет выручки, значит</div>
<div class="t" style="top:360.00px;font-size:11px;line-height:14px;color:#3d3a33;letter-spacing:0.05px;left:553.80px;">может быть товар никому не нужен.</div>
<div class="r" style="left:0;top:503px;width:1024px;height:20px;background:linear-gradient(to bottom, rgba(0,0,0,0) 0%, rgba(0,0,0,0.03) 40%, rgba(0,0,0,0.14) 100%);-webkit-mask-image:linear-gradient(to right, transparent 0px, transparent 130px, #000 260px, #000 760px, rgba(0,0,0,0.25) 900px, rgba(0,0,0,0.15) 1024px);"></div>
<svg class="r" style="left:1019px;top:515px;" width="5" height="8" viewBox="0 0 5 8"><path d="M5 0 L5 8 L1.5 8 Z" fill="#222"/></svg>
</div></body></html>
